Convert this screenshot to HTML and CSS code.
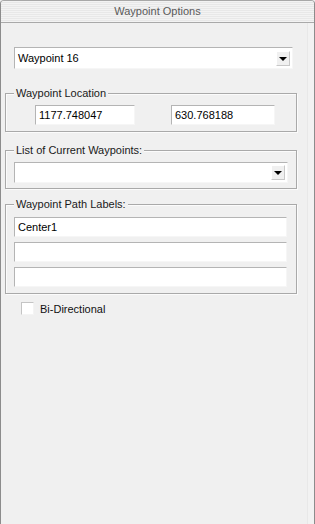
FILE: index.html
```html
<!DOCTYPE html>
<html>
<head>
<meta charset="utf-8">
<link rel="stylesheet" href="styles.css">
</head>
<body>
<div class="window">
  <div class="titlebar">Waypoint Options</div>
  <div class="content">
    <div class="combo combo-main">
      <span class="combo-text">Waypoint 16</span>
      <span class="combo-btn"><span class="tri"></span></span>
    </div>

    <div class="group group-loc">
      <div class="legend">Waypoint Location</div>
      <div class="loc-row">
        <div class="field f-x">1177.748047</div>
        <div class="field f-y">630.768188</div>
      </div>
    </div>

    <div class="group group-list">
      <div class="legend">List of Current Waypoints:</div>
      <div class="combo combo-list">
        <span class="combo-text"></span>
        <span class="combo-btn"><span class="tri"></span></span>
      </div>
    </div>

    <div class="group group-labels">
      <div class="legend">Waypoint Path Labels:</div>
      <div class="label-list">
        <div class="field f-label">Center1</div>
        <div class="field f-label"></div>
        <div class="field f-label"></div>
      </div>
    </div>

    <label class="check-row">
      <span class="checkbox"></span>
      <span class="check-text">Bi-Directional</span>
    </label>
  </div>
</div>
</body>
</html>
```
FILE: styles.css
```css
html, body {
  margin: 0;
  padding: 0;
  background: #f0f0f0;
}
body {
  font-family: "Liberation Sans", Arial, sans-serif;
  font-size: 11px;
  color: #111;
}
.window {
  width: 315px;
  height: 524px;
  box-sizing: border-box;
  border-left: 1px solid #8c8c8c;
  border-right: 1px solid #8c8c8c;
  border-top: 1px solid #a8a8a8;
  border-radius: 4px 4px 0 0;
  background: #f0f0f0;
  box-shadow: inset -6px 0 0 #f2f2f2, inset -7px 0 0 #e8e8e8;
  overflow: hidden;
}
.titlebar {
  height: 21px;
  line-height: 21px;
  text-align: center;
  color: #5a5a5a;
  border-bottom: 1px solid #a9a9a9;
  background: repeating-linear-gradient(to bottom, #f3f3f3 0, #f3f3f3 1px, #e8e8e8 1px, #e8e8e8 2px);
}
.content {
  display: flex;
  flex-direction: column;
  align-items: flex-start;
  padding-left: 4px;
}
.combo {
  box-sizing: border-box;
  display: flex;
  align-items: center;
  background: #fff;
  border-top: 1px solid #b4b4b4;
  border-left: 1px solid #b4b4b4;
  border-right: 1px solid #f6f6f6;
  border-bottom: 1px solid #f6f6f6;
}
.combo-main {
  margin-top: 24px;
  margin-left: 9px;
  width: 279px;
  height: 22px;
}
.combo-text {
  flex: 1;
  padding-left: 3px;
  font-size: 11px;
  line-height: 14px;
  color: #000;
}
.combo-btn {
  box-sizing: border-box;
  width: 14px;
  height: 15px;
  margin-right: 2px;
  background: #f0f0f0;
  border-top: 1px solid #fff;
  border-left: 1px solid #fff;
  border-right: 1px solid #c8c8c8;
  border-bottom: 1px solid #c8c8c8;
  display: flex;
  align-items: center;
  justify-content: center;
}
.tri {
  width: 0;
  height: 0;
  border-left: 4px solid transparent;
  border-right: 4px solid transparent;
  border-top: 4px solid #000;
  margin-top: 1px;
}
.group {
  box-sizing: border-box;
  width: 292px;
  border: 1px solid #a9a9a9;
  box-shadow: 1px 1px 0 #fbfbfb, inset 1px 1px 0 #fbfbfb;
  display: flex;
  flex-direction: column;
  align-items: flex-start;
}
.legend {
  margin-top: -7px;
  margin-left: 8px;
  padding: 0 2px;
  line-height: 13px;
  font-size: 11px;
  background: #f0f0f0;
  color: #1a1a1a;
}
.group-loc {
  margin-top: 24px;
  padding-bottom: 6px;
}
.loc-row {
  display: flex;
  gap: 36px;
  margin-top: 5px;
  margin-left: 29px;
}
.field {
  box-sizing: border-box;
  height: 20px;
  background: #fff;
  border-top: 1px solid #b4b4b4;
  border-left: 1px solid #b4b4b4;
  border-right: 1px solid #f6f6f6;
  border-bottom: 1px solid #f6f6f6;
  padding-left: 3px;
  font-size: 11px;
  line-height: 18px;
  color: #000;
}
.f-x { width: 100px; }
.f-y { width: 104px; }
.group-list {
  margin-top: 18px;
  padding-bottom: 5px;
}
.combo-list {
  margin-top: 5px;
  margin-left: 8px;
  width: 274px;
  height: 21px;
}
.group-labels {
  margin-top: 15px;
  padding-bottom: 6px;
}
.label-list {
  display: flex;
  flex-direction: column;
  gap: 5px;
  margin-top: 6px;
  margin-left: 8px;
}
.f-label { width: 273px; }
.check-row {
  display: flex;
  align-items: center;
  margin-top: 8px;
  margin-left: 16px;
}
.checkbox {
  box-sizing: border-box;
  width: 13px;
  height: 13px;
  background: #fff;
  border-top: 1px solid #c4c4c4;
  border-left: 1px solid #c4c4c4;
  border-right: 1px solid #f4f4f4;
  border-bottom: 1px solid #f4f4f4;
}
.check-text {
  margin-left: 6px;
  font-size: 11px;
  color: #111;
}
```
